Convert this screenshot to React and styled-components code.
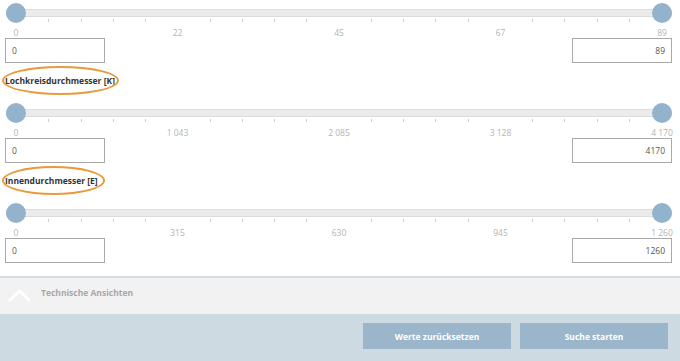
import React from "react";
import styled, { createGlobalStyle } from "styled-components";

const GlobalStyle = createGlobalStyle`
  html, body {
    margin: 0;
    padding: 0;
    background: #fff;
    font-family: "Open Sans", "Liberation Sans", sans-serif;
  }
  * { box-sizing: border-box; }
`;

const filters = [
  { min: 0, max: 89, labels: ["0", "22", "45", "67", "89"], title: "Lochkreisdurchmesser [K]", ring: 117 },
  { min: 0, max: 4170, labels: ["0", "1 043", "2 085", "3 128", "4 170"], title: "Innendurchmesser [E]", ring: 103 },
  { min: 0, max: 1260, labels: ["0", "315", "630", "945", "1 260"] },
];

const Page = styled.div`
  width: 680px;
  height: 361px;
  display: flex;
  flex-direction: column;
  overflow: hidden;
`;

const Filters = styled.div`
  flex: 1;
  padding: 3px 8px 0 5px;
`;

const Slider = styled.div`
  position: relative;
  height: 24px;
`;

const Track = styled.div`
  position: absolute;
  top: 6px;
  left: 1px;
  right: 0;
  height: 8px;
  background: #ebebeb;
  border: 1px solid #dcdcdc;
  border-radius: 2px;
`;

const Ticks = styled.div`
  position: absolute;
  top: 16px;
  left: 11px;
  right: 10px;
  display: flex;
  justify-content: space-between;
`;

const Tick = styled.span`
  width: 1px;
  height: 3px;
  background: ${(p) => (p.$major ? "transparent" : "#cfcfcf")};
`;

const Thumb = styled.div`
  position: absolute;
  top: 0;
  ${(p) => (p.$end ? "right: 0;" : "left: 1px;")}
  width: 20px;
  height: 20px;
  border-radius: 50%;
  background: #93b3cd;
`;

const Scale = styled.div`
  display: flex;
  justify-content: space-between;
  margin: 0 10px 0 11px;
  height: 11px;
  font-size: 8.5px;
  line-height: 11px;
  color: #b3b3b3;
`;

const ScaleLabel = styled.span`
  width: 0;
  display: flex;
  justify-content: center;
  white-space: nowrap;
`;

const Inputs = styled.div`
  display: flex;
  justify-content: space-between;
`;

const ValueInput = styled.div`
  width: 100px;
  height: 25px;
  border: 1px solid #a9a9a9;
  padding: 0 6px;
  font-size: 8.5px;
  line-height: 23px;
  color: #555;
  text-align: ${(p) => (p.$right ? "right" : "left")};
`;

const TitleRow = styled.div`
  height: 40px;
  padding-top: 12px;
  display: flex;
  align-items: flex-start;
`;

const Title = styled.span`
  position: relative;
  font-size: 8.5px;
  font-weight: 700;
  line-height: 11px;
  color: #333;
`;

const Ring = styled.span`
  position: absolute;
  left: -3px;
  top: -9px;
  height: 29px;
  border: 2px solid #e99a3d;
  border-radius: 50%;
`;

const Toggle = styled.div`
  height: 38px;
  border-top: 2px solid #d5dde3;
  background: #f2f2f2;
  display: flex;
  align-items: flex-start;
  gap: 9px;
  padding: 9px 0 0 7px;
  font-size: 8.5px;
  font-weight: 700;
  line-height: 11px;
  color: #a8a8a8;
`;

const Chevron = styled.svg`
  margin-top: 2px;
  flex-shrink: 0;
`;

const Footer = styled.div`
  height: 47px;
  background: #cedae1;
  display: flex;
  justify-content: flex-end;
  gap: 9px;
  padding: 9px 12px 0 0;
`;

const Button = styled.button`
  width: 148px;
  height: 26px;
  border: none;
  background: #9bb6cb;
  color: #fff;
  font-family: inherit;
  font-size: 8.5px;
  font-weight: 700;
  padding: 0;
`;

function RangeFilter({ min, max, labels, title, ring }) {
  return (
    <>
      <Slider>
        <Track />
        <Ticks>
          {Array.from({ length: 21 }, (_, i) => (
            <Tick key={i} $major={i % 5 === 0} />
          ))}
        </Ticks>
        <Thumb />
        <Thumb $end />
      </Slider>
      <Scale>
        {labels.map((l) => (
          <ScaleLabel key={l}>{l}</ScaleLabel>
        ))}
      </Scale>
      <Inputs>
        <ValueInput>{min}</ValueInput>
        <ValueInput $right>{max}</ValueInput>
      </Inputs>
      {title && (
        <TitleRow>
          <Title>
            {title}
            <Ring style={{ width: ring }} />
          </Title>
        </TitleRow>
      )}
    </>
  );
}

export default function App() {
  return (
    <Page>
      <GlobalStyle />
      <Filters>
        {filters.map((f, i) => (
          <RangeFilter key={i} {...f} />
        ))}
      </Filters>
      <Toggle>
        <Chevron width="25" height="13" viewBox="0 0 25 13">
          <path d="M2 12 L12.5 2 L23 12" fill="none" stroke="#fff" strokeWidth="3" />
        </Chevron>
        Technische Ansichten
      </Toggle>
      <Footer>
        <Button>Werte zurücksetzen</Button>
        <Button>Suche starten</Button>
      </Footer>
    </Page>
  );
}
